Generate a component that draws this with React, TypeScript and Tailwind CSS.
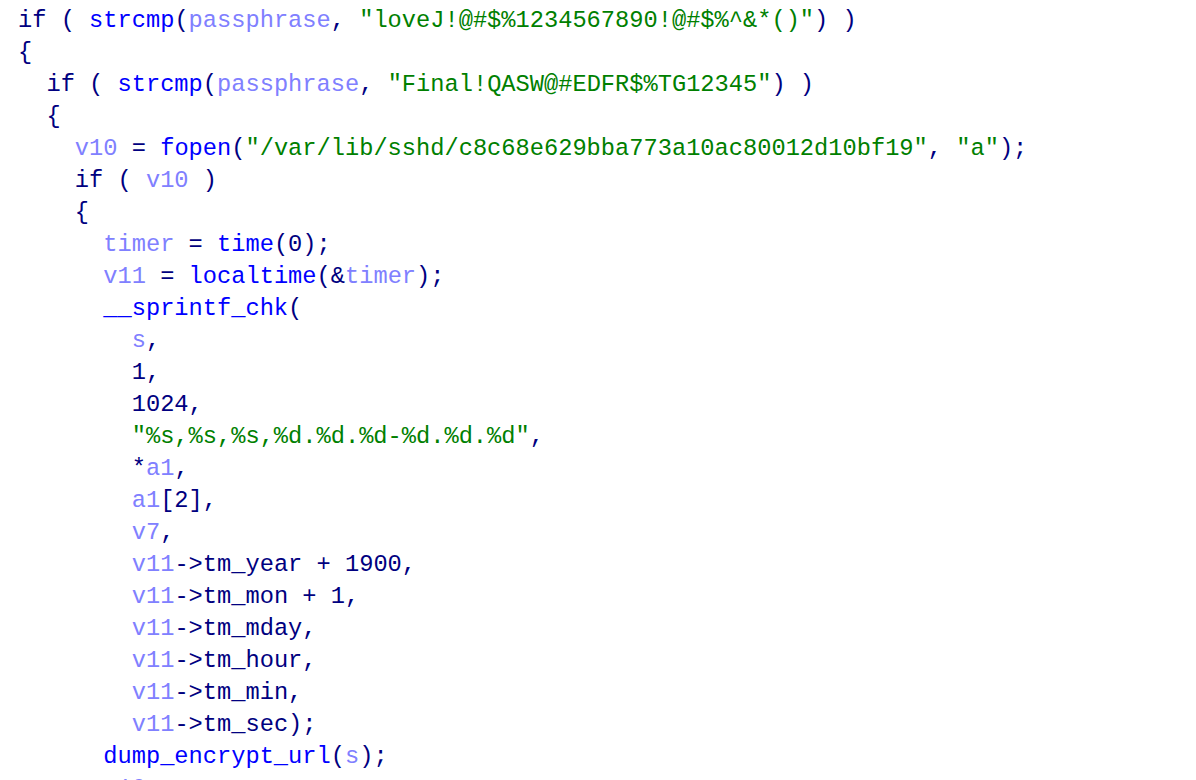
import React from "react";

type Tok = [string, string];
const K = "text-[#000080]"; // keywords / punctuation
const F = "text-[#0000ff]"; // functions
const V = "text-[#8080ff]"; // variables
const S = "text-[#008000]"; // strings

const lines: Tok[][] = [
  [[K, "if ( "], [F, "strcmp"], [K, "("], [V, "passphrase"], [K, ", "], [S, "\"loveJ!@#$%1234567890!@#$%^&*()\""], [K, ") )"]],
  [[K, "{"]],
  [[K, "  if ( "], [F, "strcmp"], [K, "("], [V, "passphrase"], [K, ", "], [S, "\"Final!QASW@#EDFR$%TG12345\""], [K, ") )"]],
  [[K, "  {"]],
  [[K, "    "], [V, "v10"], [K, " = "], [F, "fopen"], [K, "("], [S, "\"/var/lib/sshd/c8c68e629bba773a10ac80012d10bf19\""], [K, ", "], [S, "\"a\""], [K, ");"]],
  [[K, "    if ( "], [V, "v10"], [K, " )"]],
  [[K, "    {"]],
  [[K, "      "], [V, "timer"], [K, " = "], [F, "time"], [K, "(0);"]],
  [[K, "      "], [V, "v11"], [K, " = "], [F, "localtime"], [K, "(&"], [V, "timer"], [K, ");"]],
  [[K, "      "], [F, "__sprintf_chk"], [K, "("]],
  [[K, "        "], [V, "s"], [K, ","]],
  [[K, "        1,"]],
  [[K, "        1024,"]],
  [[K, "        "], [S, "\"%s,%s,%s,%d.%d.%d-%d.%d.%d\""], [K, ","]],
  [[K, "        *"], [V, "a1"], [K, ","]],
  [[K, "        "], [V, "a1"], [K, "[2],"]],
  [[K, "        "], [V, "v7"], [K, ","]],
  [[K, "        "], [V, "v11"], [K, "->tm_year + 1900,"]],
  [[K, "        "], [V, "v11"], [K, "->tm_mon + 1,"]],
  [[K, "        "], [V, "v11"], [K, "->tm_mday,"]],
  [[K, "        "], [V, "v11"], [K, "->tm_hour,"]],
  [[K, "        "], [V, "v11"], [K, "->tm_min,"]],
  [[K, "        "], [V, "v11"], [K, "->tm_sec);"]],
  [[K, "      "], [F, "dump_encrypt_url"], [K, "("], [V, "s"], [K, ");"]],
  [[K, "      "], [V, "v10"]],
];

export default function App() {
  return (
    <div className="w-[1196px] h-[780px] overflow-hidden bg-white pl-[18px] pt-[5px] font-['Liberation_Mono',monospace] text-[23.7px] leading-[32px]">
      {lines.map((ln, i) => (
        <div key={i} className="whitespace-pre h-[32px]">
          {ln.map(([c, t], j) => (
            <span key={j} className={c}>{t}</span>
          ))}
        </div>
      ))}
    </div>
  );
}
